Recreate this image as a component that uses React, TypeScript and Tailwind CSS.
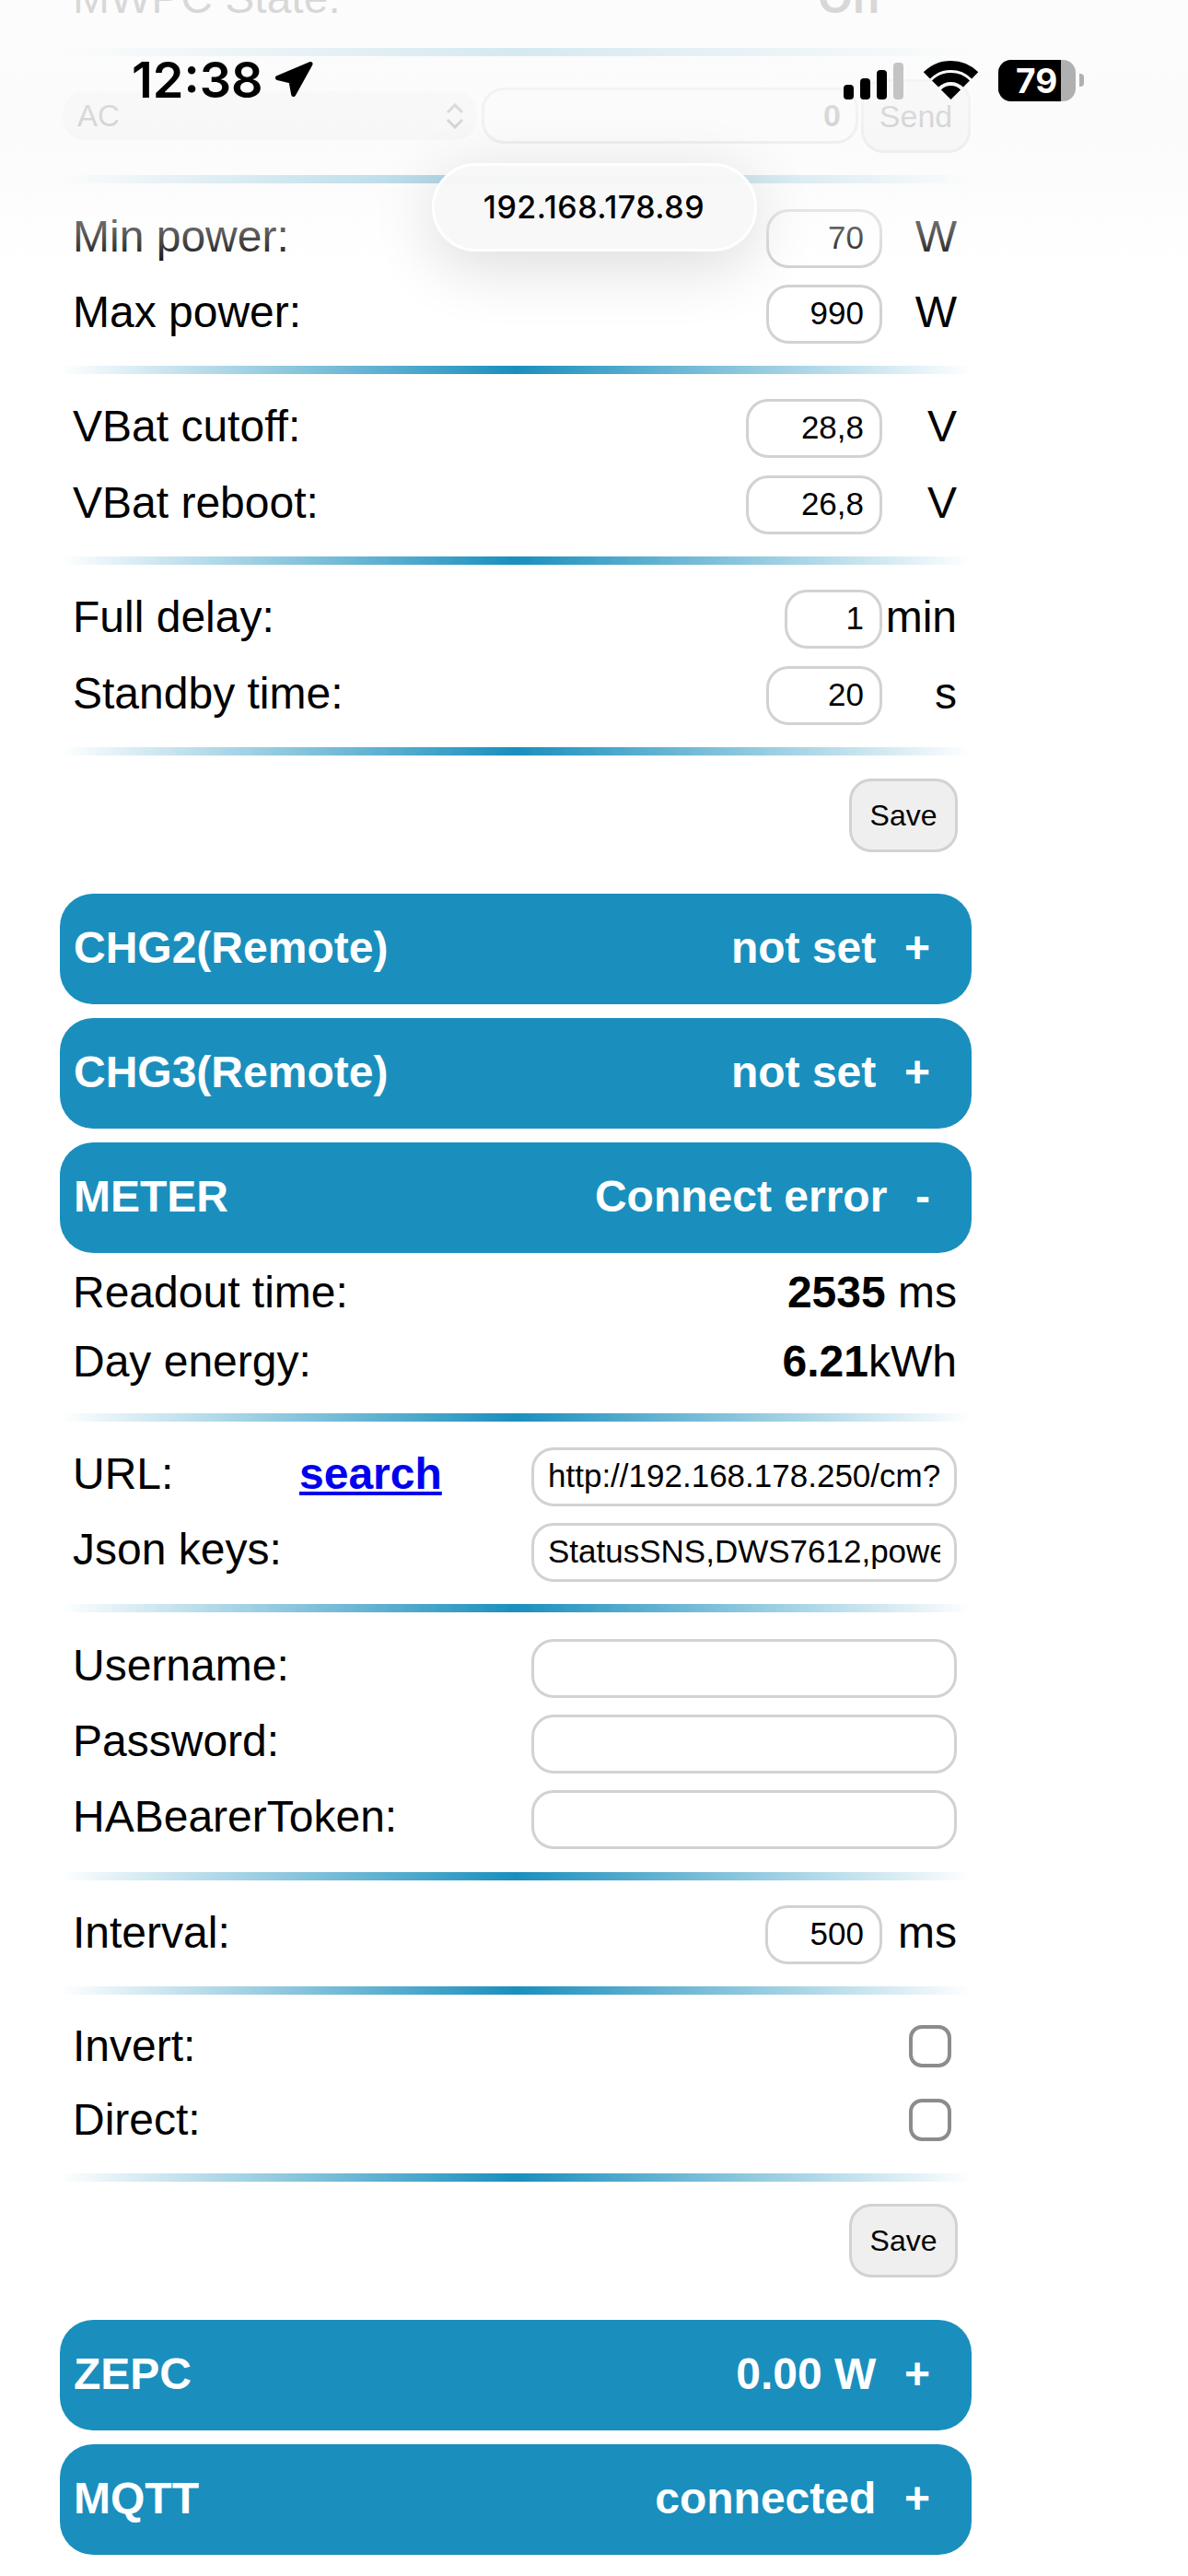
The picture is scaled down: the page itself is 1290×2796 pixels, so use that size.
import type { ReactNode } from 'react'

const Sep = ({ className = '' }: { className?: string }) => (
  <div className={`h-[9px] bg-linear-to-r from-transparent via-[#1a8fbd] to-transparent ${className}`} />
)

const Field = ({ value = '', className = '' }: { value?: string; className?: string }) => (
  <div className={`h-[64px] shrink-0 overflow-hidden whitespace-nowrap rounded-[24px] border-[3px] border-[#d2d2d2] bg-white text-[35px] leading-[56px] ${className}`}>
    {value}
  </div>
)

const NumberRow = ({ label, value, unit, width, className = '' }: { label: string; value: string; unit: string; width: string; className?: string }) => (
  <div className={`flex h-[64px] items-center pl-[14px] pr-[16px] ${className}`}>
    <span className="flex-1 pb-[5px]">{label}</span>
    <Field value={value} className={`${width} pr-[17px] text-right`} />
    <span className="w-[81px] pb-[5px] text-right">{unit}</span>
  </div>
)

const TextRow = ({ label, value = '', extra, className = '' }: { label: string; value?: string; extra?: ReactNode; className?: string }) => (
  <div className={`flex h-[64px] items-center pl-[14px] pr-[16px] ${className}`}>
    <span className="w-[246px] pb-[6px]">{label}</span>
    <span className="flex-1 pb-[6px]">{extra}</span>
    <div className="h-[64px] w-[462px] shrink-0 rounded-[24px] border-[3px] border-[#d2d2d2] bg-white px-[15px] text-[35px] leading-[56px]">
      <div className="overflow-hidden whitespace-nowrap">{value}</div>
    </div>
  </div>
)

const StatRow = ({ label, children, className = '' }: { label: string; children: ReactNode; className?: string }) => (
  <div className={`flex h-[75px] items-center justify-between pl-[14px] pr-[16px] leading-[75px] ${className}`}>
    <span>{label}</span>
    <span>{children}</span>
  </div>
)

const CheckRow = ({ label, className = '' }: { label: string; className?: string }) => (
  <div className={`flex h-[46px] items-center justify-between pl-[14px] pr-[22px] ${className}`}>
    <span>{label}</span>
    <div className="h-[46px] w-[46px] rounded-[14px] border-[4px] border-[#8c8c8c] bg-white" />
  </div>
)

const SaveButton = ({ className = '' }: { className?: string }) => (
  <div className={`flex justify-end pr-[15px] ${className}`}>
    <div className="flex h-[80px] w-[118px] items-center justify-center rounded-[24px] border-[3px] border-[#d2d2d2] bg-[#efefef] text-[32px]">
      Save
    </div>
  </div>
)

const Bar = ({ title, status, sign = '+', className = '' }: { title: string; status: string; sign?: string; className?: string }) => (
  <div className={`flex h-[120px] items-center justify-between rounded-[36px] bg-[#1a8fbd] pb-[3px] pl-[15px] pr-[45px] font-bold text-white ${className}`}>
    <span>{title}</span>
    <span>
      {status}&nbsp;&nbsp;<span className="ml-[4px]">{sign}</span>
    </span>
  </div>
)

const WifiIcon = () => (
  <svg width="59" height="42" viewBox="0 0 59 42" fill="none">
    <path d="M3.34 15.84A37 37 0 0 1 55.66 15.84" stroke="#000" strokeWidth="10" />
    <path d="M12.53 25.03A24 24 0 0 1 46.47 25.03" stroke="#000" strokeWidth="10" />
    <path d="M29.5 42L18.9 31.4A15 15 0 0 1 40.1 31.4Z" fill="#000" />
  </svg>
)

const ArrowIcon = () => (
  <svg width="44" height="44" viewBox="0 0 44 44">
    <path d="M40 4.5L4.5 19.5L19 23L21.7 37.5Z" fill="#000" stroke="#000" strokeWidth="5" strokeLinejoin="round" />
  </svg>
)

const StatusBar = () => (
  <div className="flex h-[46px] items-center justify-between pl-[143px] pr-[113px] text-black">
    <div className="flex items-center font-['Inter',sans-serif] text-[54px] font-semibold leading-[46px]">
      12:38
      <span className="ml-[11px]">
        <ArrowIcon />
      </span>
    </div>
    <div className="flex items-end">
      <div className="flex items-end gap-[7px] pb-[2px]">
        <div className="h-[16px] w-[11px] rounded-[4px] bg-black" />
        <div className="h-[23px] w-[11px] rounded-[4px] bg-black" />
        <div className="h-[32px] w-[11px] rounded-[4px] bg-black" />
        <div className="h-[40px] w-[11px] rounded-[4px] bg-[#c4c4c4]" />
      </div>
      <div className="ml-[22px] pb-[2px]">
        <WifiIcon />
      </div>
      <div className="ml-[22px] flex items-center">
        <div className="flex h-[45px] w-[84px] overflow-hidden rounded-[14px] bg-[#b0b0b0]">
          <div className="w-[68px] bg-black pl-[19px] font-['Inter',sans-serif] text-[37px] font-bold leading-[45px] text-white">79</div>
        </div>
        <div className="ml-[4px] h-[14px] w-[5px] rounded-r-[4px] bg-[#b0b0b0]" />
      </div>
    </div>
  </div>
)

export default function App() {
  return (
    <div className="relative h-[2796px] overflow-hidden bg-white font-['Liberation_Sans',Arial,sans-serif] text-[48px] leading-[56px] text-black">
      {/* page is scrolled, first row is cut off by the top edge */}
      <div className="ml-[65px] mt-[-40px] w-[990px]">
        <div className="flex h-[75px] items-center justify-between pl-[14px] pr-[100px] leading-[75px]">
          <span>MWPC State:</span>
          <b>On</b>
        </div>
        <Sep className="mt-[17px]" />

        <div className="mt-[24px] flex h-[81px] items-center">
          <div className="ml-[3px] flex h-[53px] w-[450px] items-center justify-between rounded-[24px] bg-[#efefef] pl-[16px] pr-[14px] text-[33px] text-[#555]">
            AC
            <svg width="20" height="28" viewBox="0 0 20 28" fill="none" stroke="#555" strokeWidth="3">
              <path d="M2 10L10 2L18 10M2 18L10 26L18 18" />
            </svg>
          </div>
          <div className="ml-[5px] h-[61px] w-[409px] rounded-[24px] border-[3px] border-[#d2d2d2] pr-[16px] text-right text-[34px] font-bold leading-[54px] text-[#555]">
            0
          </div>
          <div className="ml-[3px] flex h-[80px] w-[119px] items-center justify-center rounded-[24px] border-[3px] border-[#d2d2d2] bg-[#efefef] text-[34px] text-[#555]">
            Send
          </div>
        </div>
        <Sep className="mt-[24px]" />

        <NumberRow className="mt-[28px]" label="Min power:" value="70" unit="W" width="w-[126px]" />
        <NumberRow className="mt-[18px]" label="Max power:" value="990" unit="W" width="w-[126px]" />
        <Sep className="mt-[24px]" />

        <NumberRow className="mt-[27px]" label="VBat cutoff:" value="28,8" unit="V" width="w-[148px]" />
        <NumberRow className="mt-[19px]" label="VBat reboot:" value="26,8" unit="V" width="w-[148px]" />
        <Sep className="mt-[24px]" />

        <NumberRow className="mt-[27px]" label="Full delay:" value="1" unit="min" width="w-[106px]" />
        <NumberRow className="mt-[19px]" label="Standby time:" value="20" unit="s" width="w-[126px]" />
        <Sep className="mt-[24px]" />

        <SaveButton className="mt-[25px]" />

        <Bar className="mt-[45px]" title="CHG2(Remote)" status="not set" />
        <Bar className="mt-[15px]" title="CHG3(Remote)" status="not set" />
        <Bar className="mt-[15px]" title="METER" status="Connect error" sign="-" />

        <StatRow className="mt-[5px]" label="Readout time:">
          <b>2535</b> ms
        </StatRow>
        <StatRow label="Day energy:">
          <b>6.21</b>kWh
        </StatRow>
        <Sep className="mt-[19px]" />

        <TextRow
          className="mt-[28px]"
          label="URL:"
          value="http://192.168.178.250/cm?"
          extra={<a className="font-bold text-[#0000ee] underline">search</a>}
        />
        <TextRow className="mt-[18px]" label="Json keys:" value="StatusSNS,DWS7612,power" />
        <Sep className="mt-[24px]" />

        <TextRow className="mt-[29px]" label="Username:" />
        <TextRow className="mt-[18px]" label="Password:" />
        <TextRow className="mt-[18px]" label="HABearerToken:" />
        <Sep className="mt-[25px]" />

        <NumberRow className="mt-[27px]" label="Interval:" value="500" unit="ms" width="w-[127px]" />
        <Sep className="mt-[24px]" />

        <CheckRow className="mt-[33px]" label="Invert:" />
        <CheckRow className="mt-[34px]" label="Direct:" />
        <Sep className="mt-[35px]" />

        <SaveButton className="mt-[24px]" />

        <Bar className="mt-[46px]" title="ZEPC" status="0.00 W" />
        <Bar className="mt-[15px]" title="MQTT" status="connected" />
      </div>

      {/* iOS status bar and address pill over the page */}
      <div className="absolute inset-x-0 top-0 h-[295px] bg-[linear-gradient(to_bottom,rgba(252,252,252,.86)_0,rgba(250,250,250,.8)_125px,rgba(250,250,250,.62)_195px,rgba(252,252,252,.38)_250px,rgba(255,255,255,0)_295px)] pt-[64px]">
        <StatusBar />
        <div className="mx-auto mt-[67px] flex h-[96px] w-[353px] items-center justify-center rounded-[48px] border-[3px] border-white bg-[#f8f8f8]/95 font-['Inter',sans-serif] text-[34px] font-medium tracking-[0.5px] shadow-[0_16px_70px_rgba(0,0,0,0.14)]">
          192.168.178.89
        </div>
      </div>
    </div>
  )
}
